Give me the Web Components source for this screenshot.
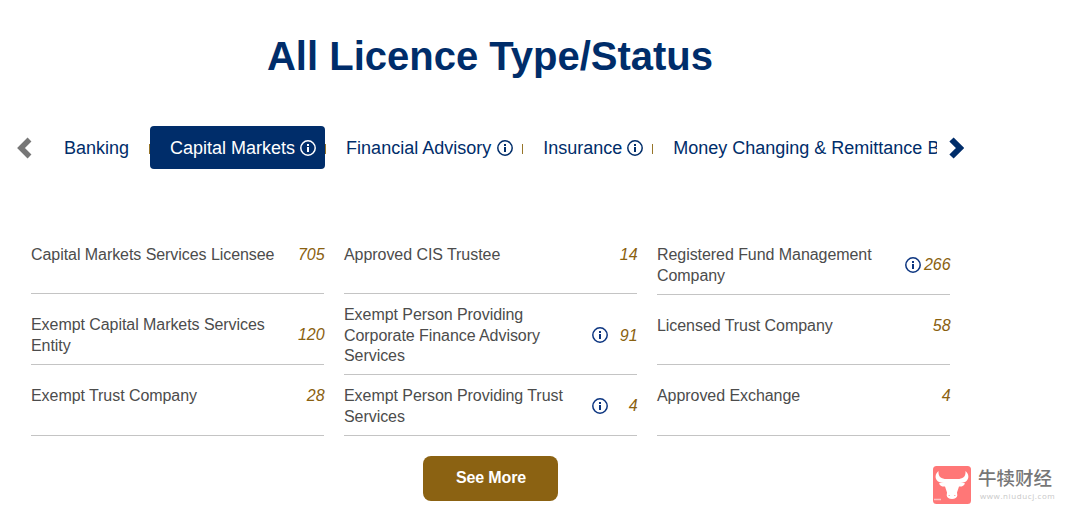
<!DOCTYPE html>
<html lang="en">
<head>
<meta charset="utf-8">
<title>All Licence Type/Status</title>
<style>
  body {
    margin: 0;
    background: #fff;
    font-family: "Liberation Sans", Arial, sans-serif;
    overflow: hidden;
  }
</style>
</head>
<body>
<licence-page>
  <licence-tabs slot="tabs">
    <licence-tab>Banking</licence-tab>
    <licence-tab active info>Capital Markets</licence-tab>
    <licence-tab info style="--gap:6px">Financial Advisory</licence-tab>
    <licence-tab info>Insurance</licence-tab>
    <licence-tab>Money Changing &amp; Remittance Business</licence-tab>
  </licence-tabs>

  <licence-column>
    <licence-item count="705" style="--height:50px;--top:0px">Capital Markets Services Licensee</licence-item>
    <licence-item count="120" style="--height:71px;--top:20px">Exempt Capital Markets Services Entity</licence-item>
    <licence-item count="28" style="--height:71px;--top:20px">Exempt Trust Company</licence-item>
  </licence-column>
  <licence-column>
    <licence-item count="14" style="--height:50px;--top:0px">Approved CIS Trustee</licence-item>
    <licence-item count="91" info style="--height:81px;--top:10px">Exempt Person Providing Corporate Finance Advisory Services</licence-item>
    <licence-item count="4" info style="--height:61px;--top:10px">Exempt Person Providing Trust Services</licence-item>
  </licence-column>
  <licence-column>
    <licence-item count="266" info style="--height:51px;--top:0px">Registered Fund Management Company</licence-item>
    <licence-item count="58" style="--height:70px;--top:20px">Licensed Trust Company</licence-item>
    <licence-item count="4" style="--height:71px;--top:20px">Approved Exchange</licence-item>
  </licence-column>

  <more-button slot="more">See More</more-button>
  <site-mark slot="mark"></site-mark>
</licence-page>

<script>
class InfoIcon extends HTMLElement {
  constructor() {
    super();
    this.attachShadow({ mode: "open" }).innerHTML = `
      <style>
        :host { display: block; flex: none; width: 16px; height: 16px; }
        svg { display: block; }
      </style>
      <svg width="16" height="16" viewBox="0 0 16 16">
        <circle cx="8" cy="8" r="7.2" fill="none" stroke="currentColor" stroke-width="1.5"/>
        <path d="M7 4h2v2H7zM7 7h2v5H7z" fill="currentColor"/>
      </svg>`;
  }
}
customElements.define("info-icon", InfoIcon);

class LicenceTab extends HTMLElement {
  constructor() {
    super();
    const icon = this.hasAttribute("info") ? "<info-icon></info-icon>" : "";
    this.attachShadow({ mode: "open" }).innerHTML = `
      <style>
        :host {
          display: flex;
          flex: none;
          align-items: center;
          height: 43px;
          color: #002d6a;
          font-size: 18px;
          white-space: nowrap;
        }
        .tab {
          display: flex;
          align-items: center;
          gap: var(--gap, 5px);
          height: 43px;
          box-sizing: border-box;
          padding: 0 20px;
        }
        .tab span { padding-top: 2px; }
        :host([info]) .tab { padding-right: 9px; }
        :host([active]) .tab { background: #002d6a; color: #fff; border-radius: 4px; }
        .sep { width: 1px; height: 10px; margin-top: 3px; background: #977529; }
        info-icon { margin-top: 1px; }
      </style>
      <div class="tab"><span><slot></slot></span>${icon}</div>
      <div class="sep"></div>`;
  }
}
customElements.define("licence-tab", LicenceTab);

class LicenceTabs extends HTMLElement {
  constructor() {
    super();
    this.attachShadow({ mode: "open" }).innerHTML = `
      <style>
        :host { display: flex; align-items: center; height: 43px; padding-left: 17px; }
        .strip { display: flex; width: 893px; margin: 0 12px 0 12px; overflow: hidden; }
        svg { flex: none; display: block; margin-top: 1px; }
      </style>
      <svg width="15" height="22" viewBox="0 0 15 22">
        <path d="M12.500 2.500 4 11l8.500 8.500" fill="none" stroke="#777" stroke-width="5.500"/>
      </svg>
      <div class="strip"><slot></slot></div>
      <svg width="15" height="22" viewBox="0 0 15 22">
        <path d="M2.500 2.500 11 11l-8.500 8.500" fill="none" stroke="#002d6a" stroke-width="6"/>
      </svg>`;
  }
}
customElements.define("licence-tabs", LicenceTabs);

class LicenceItem extends HTMLElement {
  constructor() {
    super();
    const icon = this.hasAttribute("info") ? "<info-icon></info-icon>" : "";
    this.attachShadow({ mode: "open" }).innerHTML = `
      <style>
        :host {
          display: block;
          box-sizing: border-box;
          height: var(--height);
          padding-top: calc(var(--top) + 1px);
          border-bottom: 1px solid #c4c4c4;
          font-size: 16px;
          line-height: 20.5px;
          color: #4c4c4c;
        }
        .row { display: flex; align-items: center; margin-right: -.6px; }
        .name { width: 246px; letter-spacing: -.06px; }
        :host([info]) .name { width: 225px; }
        .value { display: flex; flex: 1; align-items: center; justify-content: flex-end; }
        .count { min-width: 29px; text-align: right; font-style: italic; color: #8a6110; }
        info-icon { color: #0c3580; margin: -1px .6px 0 0; }
      </style>
      <div class="row">
        <div class="name"><slot></slot></div>
        <div class="value">${icon}<span class="count">${this.getAttribute("count")}</span></div>
      </div>`;
  }
}
customElements.define("licence-item", LicenceItem);

class LicenceColumn extends HTMLElement {
  constructor() {
    super();
    this.attachShadow({ mode: "open" }).innerHTML = `
      <style>
        :host { display: flex; flex-direction: column; }
      </style>
      <slot></slot>`;
  }
}
customElements.define("licence-column", LicenceColumn);

class MoreButton extends HTMLElement {
  constructor() {
    super();
    this.attachShadow({ mode: "open" }).innerHTML = `
      <style>
        :host { display: block; }
        button {
          display: block;
          width: 135px;
          height: 45px;
          padding: 0 0 2px 1px;
          border: 0;
          border-radius: 8px;
          background: #8b6212;
          color: #fff;
          font: bold 16px "Liberation Sans", Arial, sans-serif;
          letter-spacing: -.15px;
        }
      </style>
      <button type="button"><slot></slot></button>`;
  }
}
customElements.define("more-button", MoreButton);

class SiteMark extends HTMLElement {
  constructor() {
    super();
    this.attachShadow({ mode: "open" }).innerHTML = `
      <style>
        :host { display: flex; gap: 7px; }
        svg { display: block; flex: none; }
        .text { display: flex; flex-direction: column; }
        .name {
          font: 500 18.5px/23px "Noto Sans CJK SC", sans-serif;
          color: #777;
          white-space: nowrap;
        }
        .url {
          padding: 1px 0 0 2px;
          font: 8px/11px "Open Sans", sans-serif;
          letter-spacing: .6px;
          color: #c8c8c8;
          white-space: nowrap;
        }
      </style>
      <svg width="38" height="38" viewBox="0 0 38 38">
        <rect width="38" height="38" rx="3.500" fill="#ff7777"/>
        <!-- horns -->
        <path d="M5.500 5C2 8 1.500 12.500 5 15.500c2 1.500 5 1.500 8.500 1.500v-4C8.500 13 5 11 5.500 5z" fill="#fff"/>
        <path d="M32.500 5c3.500 3 4 7.500.5 10.500-2 1.500-5 1.500-8.500 1.500v-4c5 0 8.500-2 8-8z" fill="#fff"/>
        <!-- head and ears -->
        <path d="M12 13h14l.8 3.500 5.200.7c-.8 2.500-3 3.600-6 3.300l-2 6 .3 3c-.3 2-2.300 3.500-5.300 3.500s-5-1.500-5.300-3.500l.3-3-2-6c-3 .3-5.200-.8-6-3.300l5.200-.7z" fill="#fff"/>
        <path d="M15.500 29.500h1.500M21 29.500h1.500" stroke="#ffb4b4"/>
        <path d="M1 33.500h7" stroke="#ffc0c0" stroke-width="1.500"/>
      </svg>
      <div class="text">
        <span class="name" lang="zh">牛犊财经</span>
        <span class="url">www.niuducj.com</span>
      </div>`;
  }
}
customElements.define("site-mark", SiteMark);

class LicencePage extends HTMLElement {
  constructor() {
    super();
    this.attachShadow({ mode: "open" }).innerHTML = `
      <style>
        :host { display: block; position: relative; width: 1068px; height: 513px; }
        main { width: 980px; }
        h1 {
          margin: 0;
          padding-top: 33px;
          font-size: 40px;
          line-height: 46px;
          text-align: center;
          color: #002d6a;
        }
        .tabs { margin-top: 47px; }
        .list {
          display: grid;
          grid-template-columns: repeat(3, 293px);
          gap: 20px;
          margin: 75px 0 0 31px;
        }
        .more { display: flex; justify-content: center; margin-top: 20px; padding-left: 1px; }
        /* floats over the bottom right corner of the page */
        .mark { position: absolute; left: 933px; top: 466px; }
      </style>
      <main>
        <h1>All Licence Type/Status</h1>
        <div class="tabs"><slot name="tabs"></slot></div>
        <div class="list"><slot></slot></div>
        <div class="more"><slot name="more"></slot></div>
      </main>
      <div class="mark"><slot name="mark"></slot></div>`;
  }
}
customElements.define("licence-page", LicencePage);
</script>
</body>
</html>
